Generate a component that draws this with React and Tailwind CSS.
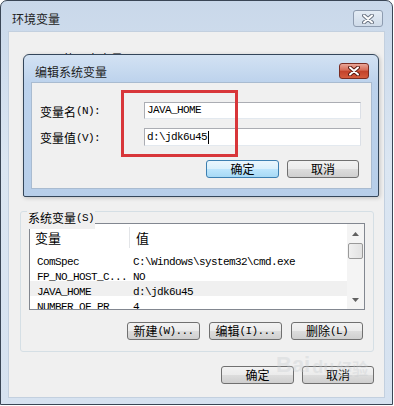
import React from 'react'

const CJK = /([\u2E80-\u9FFF\uFF00-\uFFEF]+)/

// SimSun-like mix: CJK runs in Noto, latin runs in a 6px-per-char mono
function Mix({ text, className = '' }) {
  const parts = text.split(CJK).filter(Boolean)
  return (
    <span className={`inline-flex items-center whitespace-pre text-black ${className}`}>
      {parts.map((p, i) =>
        CJK.test(p) ? (
          <span key={i} className="font-['Noto_Sans_CJK_SC',sans-serif] text-[12px] leading-none">{p}</span>
        ) : (
          <span key={i} className="font-['Liberation_Mono',monospace] text-[11px] leading-none tracking-[-0.6px]">{p}</span>
        )
      )}
    </span>
  )
}

function Btn({ label, className = '', primary = false }) {
  return (
    <div
      className={`flex h-[18px] items-center justify-center rounded-[3px] border ${
        primary
          ? 'border-[#3c7fb1] bg-[linear-gradient(#eaf6fd,#d9f0fc_50%,#bee6fd_50%,#a7d9f5)]'
          : 'border-[#707070] bg-[linear-gradient(#f2f2f2,#ebebeb_50%,#dddddd_50%,#cfcfcf)]'
      } ${className}`}
    >
      <Mix text={label} />
    </div>
  )
}

function CloseX({ light }) {
  return (
    <svg width="12" height="10" viewBox="0 0 12 10">
      <path d="M2 1.5 L10 8.5 M10 1.5 L2 8.5" stroke={light ? '#6b7584' : '#5a1a12'} strokeWidth="4" strokeLinecap="round" />
      <path d="M2 1.5 L10 8.5 M10 1.5 L2 8.5" stroke="#ffffff" strokeWidth="2" strokeLinecap="round" />
    </svg>
  )
}

const rows = [
  ['ComSpec', 'C:\\Windows\\system32\\cmd.exe'],
  ['FP_NO_HOST_C...', 'NO'],
  ['JAVA_HOME', 'd:\\jdk6u45', true],
  ['NUMBER_OF_PR', '4'],
]

export default function App() {
  return (
    <div className="relative h-[406px] w-[394px] overflow-hidden bg-white">
      {/* outer window: 环境变量 */}
      <div className="flex h-[405px] w-[393px] flex-col rounded-t-[7px] border border-[#3a4656] bg-[linear-gradient(#c9d8ea,#dbe6f2_40%,#d6e2f0)]">
        <div className="flex h-[30px] items-start justify-between pl-[11px] pr-[9px] pt-[9px]">
          <span className="mt-[1px] font-['Noto_Sans_CJK_SC',sans-serif] text-[12px] leading-[16px] text-[#222]">环境变量</span>
          <div className="flex h-[17px] w-[30px] items-center justify-center rounded-[3px] border border-[#8e9cb0] bg-[linear-gradient(#e4ecf5,#cfdbe9)]">
            <CloseX light />
          </div>
        </div>
        <div className="mx-[7px] flex h-[367px] flex-col border border-[#c3d0df] bg-[#f0f0f0]">
          <div className="h-[179px] pl-[54px] pt-[14px]">
            <Mix text="的用户变量(U)" />
          </div>

          {/* 系统变量 groupbox */}
          <div className="relative ml-[11px] mr-[10px] flex h-[141px] flex-col rounded-[3px] border border-[#d5dfe5] px-[8px] pt-[11px]">
            <div className="absolute -top-[7px] left-[6px] bg-[#f0f0f0] px-[1px]">
              <Mix text="系统变量(S)" />
            </div>
            <div className="flex h-[87px] overflow-hidden border border-[#828790] bg-white">
              <div className="flex-1">
                <div className="flex h-[27px] items-center">
                  <div className="w-[99px] pl-[5px] font-['Noto_Sans_CJK_SC',sans-serif] text-[13px] leading-none">变量</div>
                  <div className="h-[21px] w-px bg-[#e3e5e8]" />
                  <div className="pl-[6px] font-['Noto_Sans_CJK_SC',sans-serif] text-[13px] leading-none">值</div>
                </div>
                {rows.map(([k, v, sel]) => (
                  <div key={k} className={`flex h-[15px] items-center ${sel ? 'bg-[#f0f0f0]' : ''}`}>
                    <div className="w-[100px] pl-[7px]"><Mix text={k} /></div>
                    <div className="pl-[3px]"><Mix text={v} /></div>
                  </div>
                ))}
              </div>
              <div className="flex w-[17px] flex-col items-center bg-[#f4f4f4] py-[1px]">
                <div className="flex h-[17px] items-center justify-center">
                  <svg width="7" height="4" viewBox="0 0 7 4"><path d="M0 4 L3.5 0 L7 4 Z" fill="#606060" /></svg>
                </div>
                <div className="mt-[1px] h-[16px] w-[15px] rounded-[2px] border border-[#9a9a9a] bg-[linear-gradient(90deg,#f0f0f0,#e2e2e2)]" />
                <div className="flex-1" />
                <div className="flex h-[17px] items-center justify-center">
                  <svg width="7" height="4" viewBox="0 0 7 4"><path d="M0 0 L7 0 L3.5 4 Z" fill="#606060" /></svg>
                </div>
              </div>
            </div>
            <div className="mr-[2px] mt-[12px] flex justify-end gap-[9px]">
              <Btn label="新建(W)..." className="w-[73px]" />
              <Btn label="编辑(I)..." className="w-[73px]" />
              <Btn label="删除(L)" className="w-[72px]" />
            </div>
          </div>

          <div className="mt-[14px] flex justify-end gap-[8px] pr-[10px]">
            <Btn label="确定" className="w-[73px]" />
            <Btn label="取消" className="w-[72px]" />
          </div>
        </div>
      </div>

      {/* inner dialog: 编辑系统变量 */}
      <div className="absolute left-[23px] top-[54px] flex h-[143px] w-[356px] flex-col rounded-t-[6px] rounded-b-[2px] border border-[#34465a] bg-[linear-gradient(#d3e2f3,#bcd2ec_20%,#b7cee9)] shadow-[1px_1px_4px_rgba(0,0,0,0.2)]">
        <div className="flex h-[27px] items-start justify-between pl-[11px] pr-[9px] pt-[8px]">
          <span className="mt-[1px] font-['Noto_Sans_CJK_SC',sans-serif] text-[12px] leading-[16px] text-[#1e1e1e]">编辑系统变量</span>
          <div className="flex h-[16px] w-[30px] items-center justify-center rounded-[3px] border border-[#7a2c22] bg-[linear-gradient(#e9a597,#d66a55_45%,#c2412a_50%,#d45c3e)]">
            <CloseX />
          </div>
        </div>
        <div className="ml-[7px] mr-[6px] flex h-[107px] flex-col border border-[#a9bbd0] bg-[#f0f0f0] pl-[8px] pt-[19px]">
          <div className="flex h-[17px] items-center">
            <div className="w-[104px]"><Mix text="变量名(N):" /></div>
            <div className="flex h-[17px] w-[217px] items-center border border-[#abadb3] border-b-[#e3e9ef] border-r-[#dbdfe6] bg-white pl-[2px]">
              <Mix text="JAVA_HOME" />
            </div>
          </div>
          <div className="mt-[9px] flex h-[18px] items-center">
            <div className="w-[104px]"><Mix text="变量值(V):" /></div>
            <div className="flex h-[18px] w-[217px] items-center border border-[#abadb3] border-b-[#e3e9ef] border-r-[#dbdfe6] bg-white pl-[2px]">
              <Mix text="d:\jdk6u45" />
              <div className="ml-[1px] h-[13px] w-px bg-black" />
            </div>
          </div>
          <div className="mt-[14px] flex justify-end gap-[8px] pr-[12px]">
            <Btn label="确定" className="w-[73px]" primary />
            <Btn label="取消" className="w-[72px]" />
          </div>
        </div>
      </div>

      {/* red highlight */}
      <div className="absolute left-[121px] top-[90px] h-[67px] w-[117px] border-[3px] border-[#d8363a]" />

      {/* faint watermark */}
      <div className="pointer-events-none absolute left-[276px] top-[354px] flex items-end gap-[2px] font-['Liberation_Sans',sans-serif] text-[22px] font-bold leading-none text-[#c8ccd0] opacity-35">
        <span>Bai</span>
        <span className="text-[18px]">du</span>
        <span className="font-['Noto_Sans_CJK_SC',sans-serif] text-[16px]">经验</span>
      </div>
    </div>
  )
}
